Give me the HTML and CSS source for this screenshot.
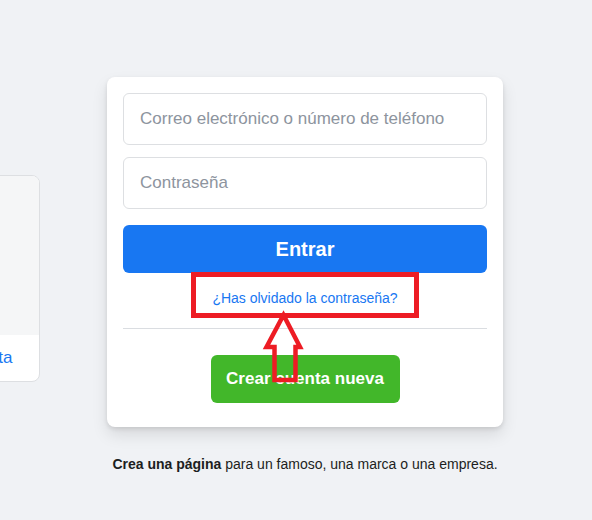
FILE: index.html
```html
<!DOCTYPE html>
<html lang="es">
  <head>
    <meta charset="UTF-8" />
    <meta name="viewport" content="width=device-width, initial-scale=1.0" />
    <title>Facebook - Entrar o registrarse</title>
    <link rel="stylesheet" href="styles.css">
  </head>
  <body>
    <div class="page">
      <div class="recent">
        <div class="recent-tile">
          <div class="recent-pic"></div>
          <a class="recent-add" href="#">Añadir cuenta</a>
        </div>
      </div>

      <div class="login-col">
        <form class="login-card">
          <input class="field" type="text" placeholder="Correo electrónico o número de teléfono" />
          <input class="field" type="password" placeholder="Contraseña" />
          <button class="btn-login" type="button">Entrar</button>
          <div class="forgot">
            <a href="#">¿Has olvidado la contraseña?</a>
          </div>
          <div class="divider"></div>
          <div class="create-wrap">
            <button class="btn-create" type="button">Crear cuenta nueva</button>
          </div>
        </form>
        <p class="page-note"><b>Crea una página</b> para un famoso, una marca o una empresa.</p>
      </div>
    </div>

    <!-- red marker over the forgot-password link -->
    <svg class="marker" width="592" height="520" viewBox="0 0 592 520">
      <rect x="193.5" y="274.5" width="223" height="41" fill="none" stroke="#ed1c24" stroke-width="5" />
      <polygon points="283.5,315 300,347 295.5,347 295.5,380 274.5,380 274.5,347 266.5,347"
        fill="none" stroke="#ed1c24" stroke-width="4.5" stroke-linejoin="miter" />
    </svg>
  </body>
</html>
```

FILE: styles.css
```css
body {
  margin: 0;
  background-color: #f0f2f5;
  font-family: "Liberation Sans", Arial, Helvetica, sans-serif;
  color: #1c1e21;
  overflow: hidden;
}
.page {
  display: flex;
  align-items: flex-start;
  gap: 67px;
  padding-top: 77px;
}
.recent {
  margin-left: -120px;
  padding-top: 98px;
}
.recent-tile {
  width: 158px;
  background-color: #ffffff;
  border: 1px solid #dddfe2;
  border-radius: 8px;
  overflow: hidden;
}
.recent-pic {
  height: 159px;
  background-color: #f5f6f7;
}
.recent-add {
  display: block;
  height: 46px;
  line-height: 46px;
  text-align: center;
  font-size: 17px;
  color: #1877f2;
  text-decoration: none;
}
.login-col {
  width: 396px;
  flex-shrink: 0;
}
.login-card {
  display: flex;
  flex-direction: column;
  background-color: #ffffff;
  border-radius: 8px;
  box-shadow: 0 2px 4px rgba(0, 0, 0, 0.1), 0 8px 16px rgba(0, 0, 0, 0.1);
  padding: 16px 16px 24px;
  margin: 0;
}
.field {
  height: 52px;
  box-sizing: border-box;
  border: 1px solid #dddfe2;
  border-radius: 6px;
  padding: 14px 16px;
  font-family: inherit;
  font-size: 17px;
  color: #1d2129;
  outline: none;
  margin-bottom: 12px;
}
.field::placeholder {
  color: #8d949e;
}
.btn-login {
  margin-top: 4px;
  height: 48px;
  border: none;
  border-radius: 6px;
  background-color: #1877f2;
  color: #ffffff;
  font-family: inherit;
  font-size: 20px;
  font-weight: bold;
}
.forgot {
  margin-top: 16px;
  text-align: center;
  font-size: 14px;
  line-height: 19px;
}
.forgot a {
  color: #1877f2;
  text-decoration: none;
}
.divider {
  height: 1px;
  background-color: #dadde1;
  margin: 20px 0 26px;
}
.create-wrap {
  display: flex;
  justify-content: center;
}
.btn-create {
  width: 189px;
  height: 48px;
  border: none;
  border-radius: 6px;
  background-color: #42b72a;
  color: #ffffff;
  font-family: inherit;
  font-size: 17px;
  font-weight: bold;
}
.page-note {
  margin: 28px 0 0;
  text-align: center;
  font-size: 14px;
  line-height: 19px;
}
.marker {
  position: absolute;
  top: 0;
  left: 0;
  pointer-events: none;
}
```
